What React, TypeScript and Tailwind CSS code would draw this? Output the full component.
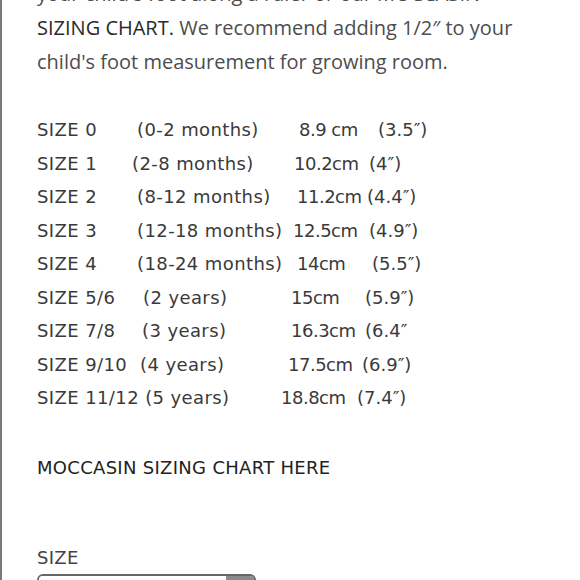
const rows = [
  { size: "SIZE 0", age: "(0-2 months)", cm: "8.9 cm", inch: "(3.5″)", a: "w-[100px]", b: "w-[162px]", c: "w-[79px]" },
  { size: "SIZE 1", age: "(2-8 months)", cm: "10.2cm", inch: "(4″)", a: "w-[95px]", b: "w-[162px]", c: "w-[75px]" },
  { size: "SIZE 2", age: "(8-12 months)", cm: "11.2cm", inch: "(4.4″)", a: "w-[100px]", b: "w-[160px]", c: "w-[70px]" },
  { size: "SIZE 3", age: "(12-18 months)", cm: "12.5cm", inch: "(4.9″)", a: "w-[100px]", b: "w-[156px]", c: "w-[76px]" },
  { size: "SIZE 4", age: "(18-24 months)", cm: "14cm", inch: "(5.5″)", a: "w-[100px]", b: "w-[160px]", c: "w-[75px]" },
  { size: "SIZE 5/6", age: "(2 years)", cm: "15cm", inch: "(5.9″)", a: "w-[106px]", b: "w-[148px]", c: "w-[74px]" },
  { size: "SIZE 7/8", age: "(3 years)", cm: "16.3cm", inch: "(6.4″", a: "w-[105px]", b: "w-[149px]", c: "w-[74px]" },
  { size: "SIZE 9/10", age: "(4 years)", cm: "17.5cm", inch: "(6.9″)", a: "w-[103px]", b: "w-[148px]", c: "w-[74px]" },
  // last row runs size and age together
  { size: "SIZE 11/12 (5 years)", age: "", cm: "18.8cm", inch: "(7.4″)", a: "w-[244px]", b: "w-0", c: "w-[76px]" },
];

const SizingChart = () => {
  return (
    <div className="w-[580px] h-[580px] overflow-hidden bg-white border-l-2 border-[#7a7a7a]">
      <div className="pl-[35px]">
        {/* intro paragraph, first line scrolled off the top */}
        <p className="-mt-[23px] font-['Open_Sans',sans-serif] text-[20px] leading-[34px] text-[#4d4d4d] w-[530px] whitespace-nowrap">
          your child's foot along a ruler or our MOCCASIN
          <br />
          <span className="text-[#2a2a2a]">SIZING CHART.</span> We recommend adding 1/2″ to your
          <br />
          child's foot measurement for growing room.
        </p>

        <div className="mt-[34px] font-['DejaVu_Sans',sans-serif] text-[18px] leading-[33.5px] text-[#3a3a3a] whitespace-nowrap">
          {rows.map((r) => (
            <div key={r.size} className="flex">
              <span className={`shrink-0 tracking-[0.4px] ${r.a}`}>{r.size}</span>
              <span className={`shrink-0 tracking-[0.4px] ${r.b}`}>{r.age}</span>
              <span className={`shrink-0 tracking-[-0.5px] ${r.c}`}>{r.cm}</span>
              <span>{r.inch}</span>
            </div>
          ))}
        </div>

        <p className="mt-[36px] font-['DejaVu_Sans',sans-serif] text-[18px] leading-[34px] text-[#222] tracking-[0.3px]">MOCCASIN SIZING CHART HERE</p>

        <p className="mt-[59px] font-['DejaVu_Sans',sans-serif] text-[18px] leading-[28px] text-[#444] tracking-[0.3px]">SIZE</p>

        <div className="mt-[2px] flex w-[219px] h-[40px] border-2 border-[#666] rounded-[6px] overflow-hidden">
          <div className="flex-1 bg-white" />
          <div className="w-[28px] bg-[#8a8a8a]" />
        </div>
      </div>
    </div>
  );
};

export default function App() {
  return <SizingChart />;
}
